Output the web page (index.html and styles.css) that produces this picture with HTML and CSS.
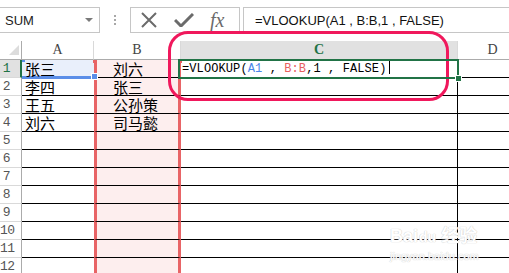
FILE: index.html
```html
<!DOCTYPE html>
<html lang="zh-CN">
<head>
    <meta charset="UTF-8">
    <meta name="viewport" content="width=device-width, initial-scale=1.0">
    <title>VLOOKUP - Excel</title>
    <link rel="stylesheet" href="styles.css">
</head>
<body>
    <div class="formula-bar">
        <div class="name-box">
            <span>SUM</span>
            <span class="name-arrow"></span>
        </div>
        <div class="grip"><span></span><span></span><span></span></div>
        <div class="fx-buttons">
            <svg class="btn-icon" width="18" height="16" viewBox="0 0 18 16">
                <path d="M2 1 L16 15 M16 1 L2 15" stroke="#6b6b6b" stroke-width="2" fill="none"/>
            </svg>
            <svg class="btn-icon" width="20" height="14" viewBox="0 0 20 14">
                <path d="M1 7 L7 13 L19 1" stroke="#6b6b6b" stroke-width="3" fill="none"/>
            </svg>
            <span class="btn-fx">fx</span>
        </div>
        <div class="formula-input">=VLOOKUP(A1 , B:B,1 , FALSE)</div>
    </div>

    <div class="sheet">
        <div class="corner"></div>
        <div class="col-head">A</div>
        <div class="col-head">B</div>
        <div class="col-head active">C</div>
        <div class="col-head">D</div>

        <div class="row-head active">1</div>
        <div class="cell ref-a">张三</div>
        <div class="cell col-b first">刘六</div>
        <div class="cell col-c editing">=VLOOKUP(<span class="txt-a">A1</span> , <span class="txt-b">B:B</span>,1 , FALSE)<span class="caret"></span></div>
        <div class="cell"></div>

        <div class="row-head">2</div>
        <div class="cell">李四</div>
        <div class="cell col-b">张三</div>
        <div class="cell col-c"></div>
        <div class="cell"></div>

        <div class="row-head">3</div>
        <div class="cell">王五</div>
        <div class="cell col-b">公孙策</div>
        <div class="cell col-c"></div>
        <div class="cell"></div>

        <div class="row-head">4</div>
        <div class="cell">刘六</div>
        <div class="cell col-b">司马懿</div>
        <div class="cell col-c"></div>
        <div class="cell"></div>

        <div class="row-head">5</div>
        <div class="cell"></div>
        <div class="cell col-b"></div>
        <div class="cell col-c"></div>
        <div class="cell"></div>

        <div class="row-head">6</div>
        <div class="cell"></div>
        <div class="cell col-b"></div>
        <div class="cell col-c"></div>
        <div class="cell"></div>

        <div class="row-head">7</div>
        <div class="cell"></div>
        <div class="cell col-b"></div>
        <div class="cell col-c"></div>
        <div class="cell"></div>

        <div class="row-head">8</div>
        <div class="cell"></div>
        <div class="cell col-b"></div>
        <div class="cell col-c"></div>
        <div class="cell"></div>

        <div class="row-head">9</div>
        <div class="cell"></div>
        <div class="cell col-b"></div>
        <div class="cell col-c"></div>
        <div class="cell"></div>

        <div class="row-head">10</div>
        <div class="cell"></div>
        <div class="cell col-b"></div>
        <div class="cell col-c"></div>
        <div class="cell"></div>

        <div class="row-head">11</div>
        <div class="cell"></div>
        <div class="cell col-b"></div>
        <div class="cell col-c"></div>
        <div class="cell"></div>

        <div class="row-head">12</div>
        <div class="cell"></div>
        <div class="cell col-b"></div>
        <div class="cell col-c"></div>
        <div class="cell"></div>
    </div>

    <!-- vòng đánh dấu công thức -->
    <div class="callout"></div>

    <div class="watermark">
        <div class="wm-logo">Bai<span class="wm-paw">du</span> 经验</div>
        <div class="wm-url">jingyan.baidu.com</div>
    </div>
</body>
</html>
```

FILE: styles.css
```css
body {
    margin: 0;
    width: 509px;
    height: 273px;
    overflow: hidden;
    position: relative;
    background: #fff;
    font-family: "Liberation Sans", Arial, sans-serif;
}
.formula-bar {
    display: flex;
    height: 26px;
    padding-top: 7px;
    margin-bottom: 8px;
}
.name-box {
    width: 101px;
    margin-left: -1px;
    box-sizing: border-box;
    border: 1px solid #c6c6c6;
    display: flex;
    align-items: center;
    justify-content: space-between;
    padding: 0 6px 0 5px;
    font-size: 13px;
    color: #222;
}
.name-arrow {
    width: 0;
    height: 0;
    border-left: 4px solid transparent;
    border-right: 4px solid transparent;
    border-top: 4px solid #7a7a7a;
}
.grip {
    width: 30px;
    display: flex;
    flex-direction: column;
    align-items: center;
    justify-content: center;
    gap: 2px;
}
.grip span {
    width: 2px;
    height: 2px;
    background: #a8a8a8;
}
.fx-buttons {
    width: 110px;
    box-sizing: border-box;
    border: 1px solid #c6c6c6;
    display: flex;
    align-items: center;
    padding-left: 9px;
    gap: 16px;
}
.btn-fx {
    font-family: "Liberation Serif", serif;
    font-style: italic;
    font-size: 20px;
    color: #6b6b6b;
    line-height: 20px;
}
.formula-input {
    flex: 1;
    margin-left: 3px;
    margin-right: -2px;
    border: 1px solid #c6c6c6;
    padding-left: 11px;
    display: flex;
    align-items: center;
    font-size: 13px;
    color: #111;
}
.sheet {
    display: grid;
    grid-template-columns: 22px 72px 87px 277px 70px;
    grid-template-rows: 19px;
    grid-auto-rows: 18px;
    width: 528px;
}
.corner {
    position: relative;
    box-sizing: border-box;
    border-right: 1px solid #ababab;
    border-bottom: 1px solid #ababab;
}
.corner::after {
    content: "";
    position: absolute;
    right: 2px;
    bottom: 4px;
    border-left: 10px solid transparent;
    border-bottom: 10px solid #dcdcdc;
}
.col-head {
    box-sizing: border-box;
    border-right: 1px solid #d9d9d9;
    border-bottom: 1px solid #ababab;
    text-align: center;
    font: 14px/18px "Liberation Serif", serif;
    color: #444;
}
.col-head.active {
    background: #e1e1e1;
    color: #217346;
    font-weight: bold;
    border-bottom-color: #217346;
}
.row-head {
    box-sizing: border-box;
    border-right: 1px solid #ababab;
    border-bottom: 1px solid #d9d9d9;
    padding-right: 8px;
    text-align: center;
    font: 13px/17px "Liberation Mono", monospace;
    color: #555;
    letter-spacing: -0.5px;
}
.row-head.active {
    background: #e1e1e1;
    color: #217346;
    border-right: 2px solid #217346;
    padding-right: 7px;
}
.cell {
    box-sizing: border-box;
    border-bottom: 1px solid #000;
    padding-left: 3px;
    font: 15px/17px "Noto Sans CJK SC", sans-serif;
    color: #000;
    white-space: nowrap;
}
.cell.col-b {
    background: #fdeeee;
    border-left: 3px solid #e86466;
    border-right: 3px solid #e86466;
    padding-left: 16px;
}
.cell.col-c {
    border-right: 1px solid #000;
}
.cell.ref-a {
    position: relative;
    background: #e9effb;
    border-bottom: 2px solid #5b8ee8;
    box-shadow: 0 1px 0 #5b8ee8;
}
.cell.ref-a::before {
    content: "";
    position: absolute;
    left: 0;
    top: 0;
    width: 3px;
    height: 2px;
    background: #5b8ee8;
}
.cell.ref-a::after {
    content: "";
    position: absolute;
    right: -4px;
    bottom: -4px;
    width: 5px;
    height: 5px;
    background: #5b8ee8;
    border: 1px solid #fff;
    z-index: 3;
}
.cell.col-b.first {
    position: relative;
}
.cell.col-b.first::before,
.cell.col-b.first::after {
    content: "";
    position: absolute;
    top: 0;
    width: 4px;
    height: 3px;
    background: #e86466;
}
.cell.col-b.first::before {
    left: -4px;
}
.cell.col-b.first::after {
    right: -4px;
}
.cell.editing {
    position: relative;
    z-index: 2;
    padding-left: 1px;
    font: 12px/17px "Liberation Mono", monospace;
    letter-spacing: 0.1px;
    color: #000;
}
.cell.editing::before {
    content: "";
    position: absolute;
    left: -3px;
    top: -1px;
    right: -2px;
    bottom: -2px;
    border: 2px solid #217346;
}
.cell.editing::after {
    content: "";
    position: absolute;
    right: -5px;
    bottom: -5px;
    width: 5px;
    height: 5px;
    background: #217346;
    border: 1px solid #fff;
}
.txt-a {
    color: #4a86e8;
}
.txt-b {
    color: #e8605f;
}
.caret {
    display: inline-block;
    width: 1px;
    height: 14px;
    background: #000;
    margin-left: 3px;
    vertical-align: -2px;
}
.callout {
    position: absolute;
    left: 168px;
    top: 31px;
    width: 281px;
    height: 70px;
    box-sizing: border-box;
    border: 3.5px solid #f0185c;
    border-radius: 20px;
}
.watermark {
    position: absolute;
    left: 390px;
    top: 226px;
    color: #fff;
    text-shadow: 0 0 1px #cfcfcf, 0 0 1px #cfcfcf;
}
.wm-logo {
    font: bold 18px/20px "Liberation Sans", "Noto Sans CJK SC", sans-serif;
}
.wm-paw {
    font-size: 14px;
    margin-left: 1px;
}
.wm-url {
    font: 11px/13px "Liberation Sans", sans-serif;
    margin-top: 3px;
}
```
